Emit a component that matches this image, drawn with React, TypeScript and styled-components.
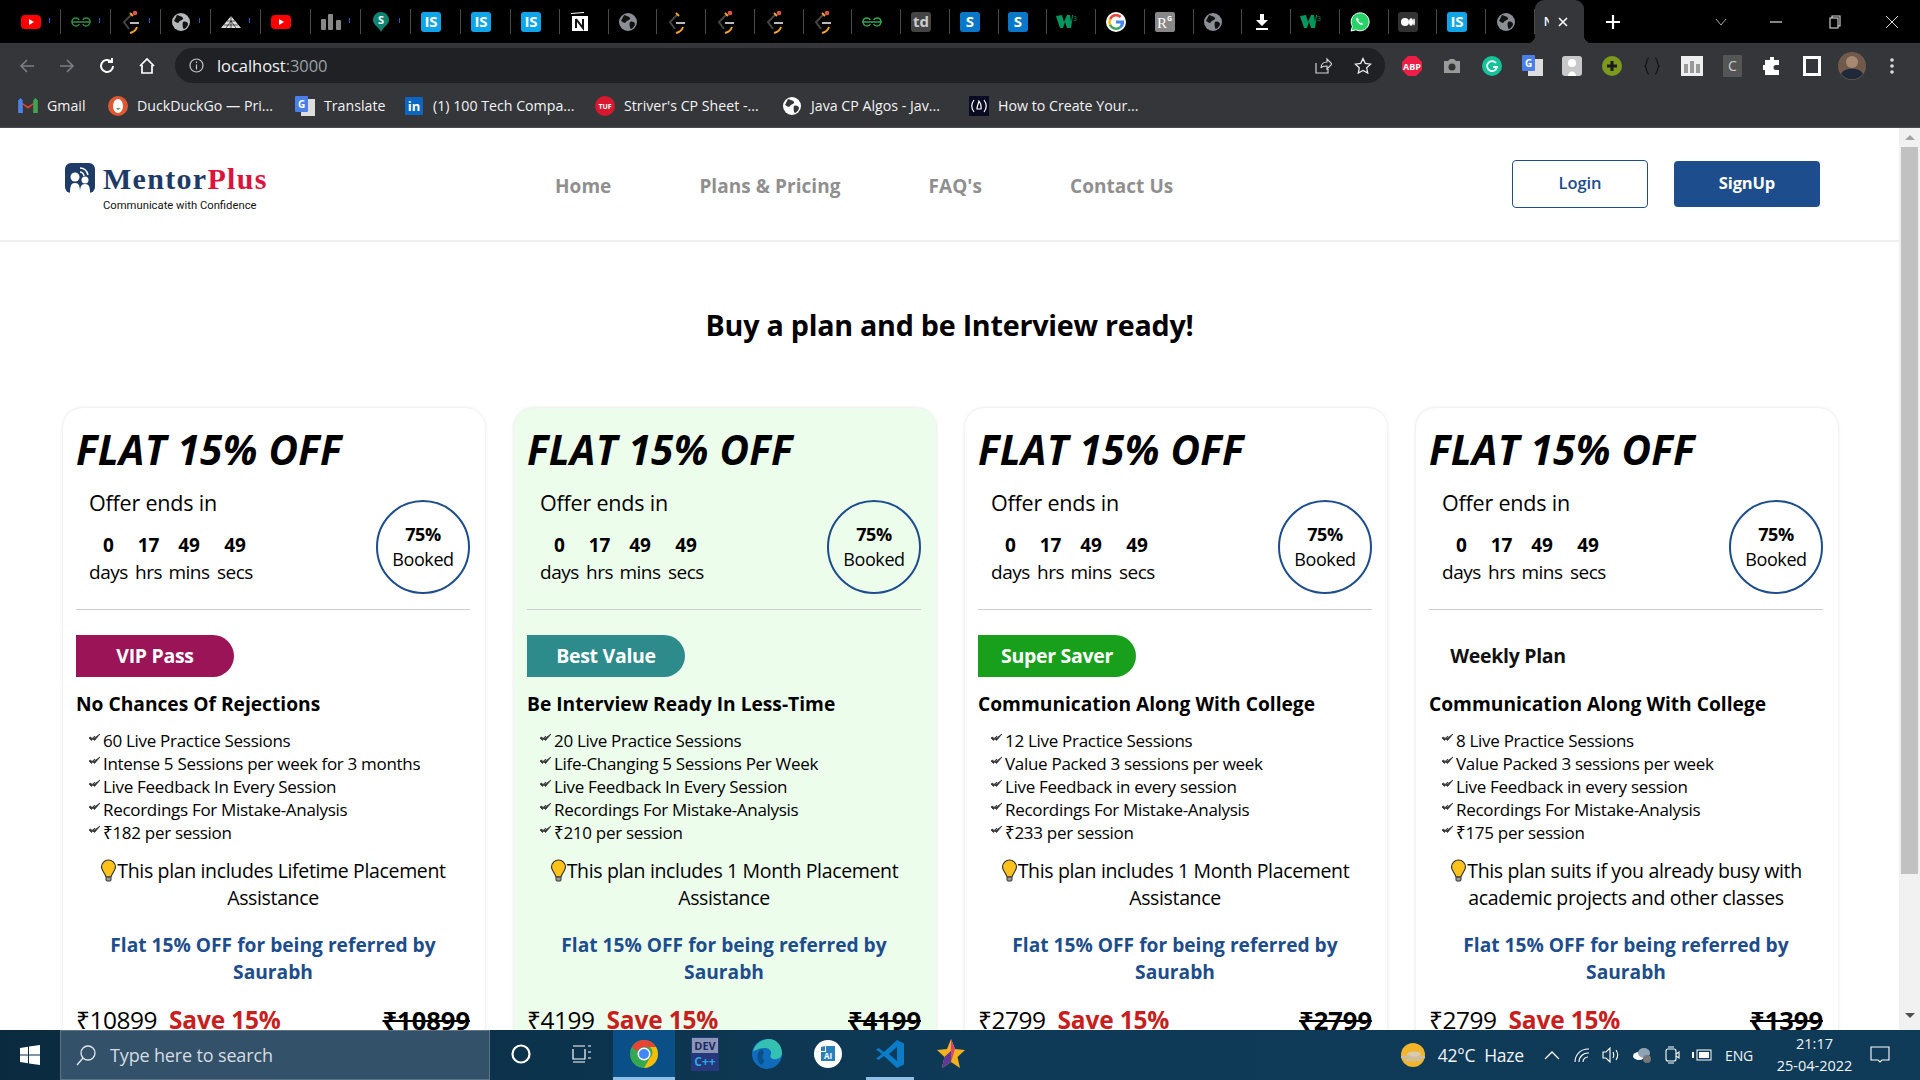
import React from 'react';
import styled, { createGlobalStyle } from 'styled-components';

const Global = createGlobalStyle`
  html, body { margin: 0; padding: 0; height: 100%; overflow: hidden; background: #fff; }
  #root { height: 100vh; }
  * { box-sizing: border-box; }
`;

const Screen = styled.div`
  height: 1080px; display: flex; flex-direction: column; overflow: hidden;
  font-family: "Open Sans", "Noto Sans", sans-serif; color: #000;
`;

/* ---------- browser chrome ---------- */
const TabStrip = styled.div`
  height: 43px; flex: none; background: #000; display: flex; align-items: center; padding-left: 11px;
`;
const Tab = styled.div<{ $mark?: boolean; $wide?: boolean }>`
  position: relative;
  width: ${p => (p.$wide ? '50px' : '48.75px')}; height: 25px; flex: none; display: flex; align-items: center; justify-content: center;
  border-right: 1px solid #4a4a4a; padding-right: ${p => (p.$wide ? '9px' : '8px')};
  ${p => p.$mark && `&::after { content: ''; position: absolute; right: 10px; top: 9px; width: 1px; height: 5px; background: #1a5fd0; }`}
`;
const ActiveTab = styled.div`
  position: relative;
  width: 49px; height: 43px; flex: none; background: #35363a; border-radius: 9px 9px 0 0;
  display: flex; align-items: center; padding-left: 9px; gap: 8px; color: #fff;
  font: 600 12px "Open Sans", sans-serif;
  &::before, &::after { content: ''; position: absolute; bottom: 0; width: 8px; height: 8px; }
  &::before { left: -8px; background: radial-gradient(circle at 0 0, #000 8px, #35363a 8.5px); }
  &::after { right: -8px; background: radial-gradient(circle at 100% 0, #000 8px, #35363a 8.5px); }
`;
const TabTitleClip = styled.span` width: 5px; overflow: hidden; flex: none; `;
const NewTab = styled.div`
  width: 58px; flex: none; display: flex; align-items: center; justify-content: center;
`;
const WindowControls = styled.div`
  margin-left: auto; display: flex; align-items: center;
`;
const WindowButton = styled.div<{ $w?: number }>`
  width: ${p => p.$w ?? 57}px; height: 43px; display: flex; align-items: center; justify-content: center;
`;
const Toolbar = styled.div`
  height: 43px; flex: none; background: #35363a; display: flex; align-items: flex-start; padding: 5px 0 0 7px;
`;
const NavIcon = styled.div`
  width: 40px; height: 35px; flex: none; display: flex; align-items: center; justify-content: center;
`;
const NavIcons = styled.div`
  display: flex; width: 168px; flex: none;
`;
const Omnibox = styled.div`
  width: 1210px; height: 35px; flex: none; background: #202124; border-radius: 18px; display: flex;
  align-items: center; padding: 0 13px 0 14px; font-size: 16.5px; color: #f1f3f4; letter-spacing: -.05px;
`;
const Host = styled.span` margin-left: 13px; `;
const Port = styled.span` color: #9aa0a6; `;
const OmniRight = styled.div` margin-left: auto; display: flex; gap: 22px; align-items: center; `;
const Extensions = styled.div`
  display: flex; align-items: center; margin-left: 7px; height: 35px;
`;
const Ext = styled.div`
  width: 40px; flex: none; display: flex; align-items: center; justify-content: center;
`;
const Bookmarks = styled.div`
  height: 42px; flex: none; background: #35363a; border-bottom: 1px solid #4c4c4f; display: flex; align-items: center;
  padding: 0 0 2px 18px; color: #f1f3f4; font-size: 14.2px;
`;
const Bookmark = styled.div<{ $w: number }>`
  width: ${p => p.$w}px; flex: none; display: flex; align-items: center; gap: 9px; white-space: nowrap;
`;

/* ---------- page ---------- */
const Viewport = styled.div`
  flex: 1; min-height: 0; display: flex; overflow: hidden;
`;
const Page = styled.div`
  flex: 1; min-width: 0; overflow: hidden; background: #fff;
`;
const Header = styled.header`
  height: 114px; border-bottom: 2px solid #f0f0f0; display: flex; align-items: flex-start;
`;
const Brand = styled.div`
  width: 490px; padding: 35px 0 0 65px; flex: none; display: grid; grid-template-columns: 30px auto; column-gap: 8px;
  grid-template-rows: 30px auto; justify-content: start;
`;
const BrandName = styled.div`
  font: bold 30px/32px "Liberation Serif", serif; letter-spacing: 1.3px; color: #1d3b66; white-space: nowrap;
`;
const BrandPlus = styled.span` color: #dc143c; `;
const Tagline = styled.div`
  grid-column: 2; font: 11.25px/16px Roboto, sans-serif; color: #111; margin-top: 5px; white-space: nowrap;
`;
const Nav = styled.nav`
  display: flex; gap: 88px; padding-top: 45px; margin-left: 65px; font: 700 19px/26px "Open Sans", sans-serif; letter-spacing: .05px; color: #8f8f8f;
`;
const NavLink = styled.span` white-space: nowrap; `;
const HeaderActions = styled.div`
  margin-left: auto; margin-right: 79px; padding-top: 32px; display: flex; align-items: center; gap: 26px;
`;
const LoginButton = styled.div`
  width: 136px; height: 48px; padding-bottom: 3px; border: 1px solid #1d4d8c; border-radius: 4px; display: flex; align-items: center;
  justify-content: center; font: 600 16.5px "Open Sans", sans-serif; letter-spacing: -.1px; color: #1d4d8c;
`;
const SignupButton = styled.div`
  width: 146px; height: 46px; padding-bottom: 3px; background: #1d4d8c; border-radius: 4px; display: flex; align-items: center;
  justify-content: center; font: 700 16.5px "Open Sans", sans-serif; letter-spacing: -.15px; color: #fff;
`;
const PageTitle = styled.h1`
  margin: 0; padding-top: 63px; height: 166px; text-align: center; font-size: 28.7px; line-height: 40px; font-weight: 700; letter-spacing: -.25px;
`;
const Cards = styled.div`
  display: grid; grid-template-columns: repeat(4, 422px); gap: 29px; padding-left: 63px;
`;
const Card = styled.article<{ $hi?: boolean }>`
  height: 720px; padding: 17px 15px 0 13px; border-radius: 20px;
  background: ${p => (p.$hi ? '#edfdec' : '#fff')};
  box-shadow: 0 0 3px 1px #ececec;
`;
const Flat = styled.div`
  font-size: 40.5px; line-height: 50px; font-weight: 700; font-style: italic; letter-spacing: .3px; white-space: nowrap;
`;
const Offer = styled.div`
  display: flex; justify-content: space-between; align-items: flex-start; height: 134px;
`;
const Countdown = styled.div` padding: 14px 0 0 13px; `;
const OfferLabel = styled.div` font-size: 21.5px; line-height: 28px; letter-spacing: -.2px; white-space: nowrap; `;
const Timer = styled.div`
  display: grid; grid-template-columns: 39px 25px 40px 36px; column-gap: 8px; row-gap: 1px; justify-items: center; margin-top: 15px;
  font-size: 19px; line-height: 26px; letter-spacing: -.5px; white-space: nowrap;
`;
const Count = styled.b` font-weight: 700; letter-spacing: 0; `;
const Circle = styled.div`
  width: 94px; height: 94px; margin-top: 25px; border: 2px solid #1d4d8c; border-radius: 50%; display: flex; flex-direction: column;
  align-items: center; justify-content: center; font-size: 18px; line-height: 25px; letter-spacing: -.4px;
`;
const CirclePct = styled.b` font-weight: 700; `;
const Divider = styled.hr`
  margin: 0; border: 0; border-top: 1px solid #ccc;
`;
const Badge = styled.div<{ $bg?: string }>`
  width: 158px; height: 42px; margin-top: 25px; padding-bottom: 1px; border-radius: 0 21px 21px 0; display: flex; align-items: center;
  justify-content: center; font-size: 19.5px; font-weight: 700; letter-spacing: -.3px;
  background: ${p => p.$bg ?? 'transparent'};
  color: ${p => (p.$bg ? '#fff' : '#111')};
`;
const PlanTitle = styled.h3`
  margin: 14px 0 0; font-size: 19.2px; line-height: 26px; font-weight: 700; white-space: nowrap;
`;
const Features = styled.ul`
  list-style: none; margin: 12px 0 0; padding: 0 0 0 13px; font-size: 17px; line-height: 23px; letter-spacing: -.3px;
`;
const Feature = styled.li`
  display: flex; align-items: flex-start; gap: 3px; white-space: nowrap;
`;
const Check = styled.svg`
  flex: none; width: 11px; height: 9px; margin-top: 4px;
`;
const Note = styled.p`
  margin: 13px 0 0; text-align: center; font-size: 19.5px; line-height: 27px; letter-spacing: -.35px;
`;
const Bulb = styled.svg`
  width: 17px; height: 23px; vertical-align: -4px;
`;
const Referral = styled.p`
  margin: 20px 0 0; text-align: center; font-size: 19.2px; line-height: 27px; font-weight: 700; color: #1d4d8c;
`;
const PriceRow = styled.div`
  display: flex; align-items: center; margin-top: 19px; font-size: 24.5px; line-height: 32px; letter-spacing: -.5px; white-space: nowrap;
`;
const Save = styled.b` color: #c81e1e; font-weight: 700; margin-left: 12px; letter-spacing: -.2px; `;
const Struck = styled.b` margin-left: auto; font-size: 25.5px; letter-spacing: 0; font-weight: 700; text-decoration: line-through; `;

const Scrollbar = styled.div`
  width: 21px; flex: none; background: #f1f1f1; display: flex; flex-direction: column; align-items: center; padding: 7px 0 0;
`;
const Thumb = styled.div` width: 17px; height: 727px; background: #c1c1c1; margin-top: 7px; `;
const ScrollArrow = styled.div<{ $down?: boolean }>`
  width: 0; height: 0; border-left: 5px solid transparent; border-right: 5px solid transparent;
  ${p => (p.$down ? 'border-top: 5px solid #505050; margin-top: 139px;' : 'border-bottom: 5px solid #a3a3a3;')}
`;

/* ---------- taskbar ---------- */
const Taskbar = styled.footer`
  height: 50px; flex: none; background: linear-gradient(90deg, #0a2a3f, #0e3a57 50%, #0f3a58); display: flex; align-items: center; color: #fff;
`;
const StartButton = styled.div`
  width: 60px; height: 50px; flex: none; display: flex; align-items: center; justify-content: center;
`;
const SearchBox = styled.div`
  width: 430px; height: 50px; flex: none; background: #34516a; border: 1px solid #5d7488; display: flex; align-items: center;
  gap: 13px; padding-left: 14px; font-size: 18px; letter-spacing: -.15px; color: #d5dce2;
`;
const TaskIcon = styled.div<{ $active?: boolean; $open?: boolean }>`
  width: 61.5px; height: 50px; flex: none; display: flex; align-items: center; justify-content: center;
  background: ${p => (p.$active ? '#0a4f85' : 'transparent')};
  border-bottom: 3px solid ${p => (p.$active || p.$open ? '#8fbfe6' : 'transparent')};
  ${p => p.$open && 'border-image: linear-gradient(90deg, transparent 8px, #8fbfe6 8px, #8fbfe6 calc(100% - 8px), transparent calc(100% - 8px)) 1;'}
`;
const Tray = styled.div`
  margin-left: auto; display: flex; align-items: center; height: 50px; font-size: 17.5px; color: #f0f4f7; letter-spacing: -.2px;
`;
const Weather = styled.div` display: flex; align-items: center; gap: 12px; margin-right: 13px; white-space: nowrap; `;
const Sys = styled.div` display: flex; align-items: center; margin-right: 5px; `;
const SysSlot = styled.div` width: 30px; flex: none; display: flex; align-items: center; justify-content: center; `;
const Lang = styled.span` width: 34px; text-align: center; font-size: 14px; margin-right: 19px; `;
const Clock = styled.div` width: 79px; text-align: center; font-size: 14.5px; line-height: 22px; letter-spacing: 0; `;
const Notify = styled.div` width: 66px; padding-left: 16px; display: flex; `;

/* ---------- icons ---------- */
const Play = ({ c = '#f00' }: { c?: string }) => (
  <svg width="20" height="14" viewBox="0 0 20 14"><rect width="20" height="14" rx="4" fill={c} /><path d="M8 4l5 3-5 3z" fill="#fff" /></svg>
);
const Globe = ({ c = '#b5b8bb' }: { c?: string }) => (
  <svg width="18" height="18" viewBox="0 0 18 18"><circle cx="9" cy="9" r="9" fill={c} /><path d="M5 2c2 1 5 1 6 3s-3 2-4 4-3 0-5-1zM11 9c2-1 5 0 5 2s-3 5-4 5-2-5-1-7z" fill="#111" /></svg>
);
const Gfg = ({ c = '#2f8d46' }: { c?: string }) => (
  <svg width="20" height="10" viewBox="0 0 20 10" fill="none" stroke={c} strokeWidth="1.4"><path d="M10 5H.8c.3-2.600 2-4 4-4 1.600 0 2.800.8 3.400 2M10 5h9.200c-.3-2.600-2-4-4-4-1.600 0-2.800.8-3.400 2M1 5c.4 2.600 2 4 4 4 1.600 0 2.800-.8 3.400-2M19 5c-.4 2.600-2 4-4 4-1.600 0-2.800-.8-3.400-2" /></svg>
);
const Coder = ({ dot = true }: { dot?: boolean }) => (
  <svg width="18" height="24" viewBox="0 0 18 24" fill="none" strokeWidth="2"><path d="M9 5L2 12l5 7" stroke="#444" /><path d="M8 3l3 3" stroke="#f5a623" /><path d="M8 13h9" stroke="#bbb" /><path d="M15 17c-1 3-3 5-7 6" stroke="#f5a623" />{dot && <circle cx="13" cy="3" r="2.300" fill="#e0514f" stroke="none" />}</svg>
);
const Square = ({ bg, t, c = '#fff', fs = 15 }: { bg: string; t: string; c?: string; fs?: number }) => (
  <svg width="20" height="20" viewBox="0 0 20 20"><rect width="20" height="20" rx="3" fill={bg} /><text x="10" y="15" textAnchor="middle" fontFamily="Open Sans, sans-serif" fontWeight="700" fontSize={fs} fill={c}>{t}</text></svg>
);
const ResearchGate = () => (
  <svg width="20" height="20" viewBox="0 0 20 20"><rect width="20" height="20" rx="2" fill="#888" /><text x="2" y="16" fontFamily="Liberation Serif, serif" fontSize="15" fill="#fff">R</text><text x="12" y="9" fontFamily="Open Sans, sans-serif" fontWeight="700" fontSize="7" fill="#fff">G</text></svg>
);
const W3 = () => (
  <svg width="22" height="16" viewBox="0 0 22 16"><path d="M0 2l6-1 2 7 3-7 3 0 1 7 1-7h1l-2 13h-4l-2-6-2 6H4z" fill="#04965f" /><text x="17" y="7" fontSize="7" fill="#04965f" fontFamily="Open Sans, sans-serif">3</text></svg>
);
const GoogleG = ({ s = 20 }: { s?: number }) => (
  <svg width={s} height={s} viewBox="0 0 20 20"><circle cx="10" cy="10" r="10" fill="#fff" /><path d="M10 4.500a5.500 5.500 0 0 1 3.700 1.400L15.500 4A8 8 0 0 0 3 6.400l2.200 1.700A5 5 0 0 1 10 4.500z" fill="#ea4335" /><path d="M3 6.400a8 8 0 0 0 0 7.200l2.200-1.700a5 5 0 0 1 0-3.800z" fill="#fbbc05" /><path d="M3 13.600A8 8 0 0 0 15.400 16l-2.100-1.700A5 5 0 0 1 5.200 11.900z" fill="#34a853" /><path d="M18 8.500h-8v3h4.600a4 4 0 0 1-1.300 2.800l2.100 1.700A8 8 0 0 0 18 8.500z" fill="#4285f4" /></svg>
);
const WhatsApp = () => (
  <svg width="20" height="20" viewBox="0 0 20 20"><path d="M1 19l1.400-4.600A9 9 0 1 1 6 17.800z" fill="#25d366" stroke="#fff" strokeWidth="1" /><path d="M7 5.500c-1.500 1-1 3 .8 5s4 3 5.500 1.800l-1.500-1.800-1.300.6c-1-.5-1.700-1.300-2.200-2.300l.7-1.200z" fill="#fff" /></svg>
);
const Medium = () => (
  <svg width="20" height="20" viewBox="0 0 20 20"><rect width="20" height="20" rx="3" fill="#333" /><circle cx="7" cy="10" r="4" fill="#fff" /><ellipse cx="13" cy="10" rx="2" ry="3.800" fill="#fff" /><ellipse cx="16" cy="10" rx=".9" ry="3.400" fill="#fff" /></svg>
);
const Down = () => (
  <svg width="14" height="16" viewBox="0 0 14 16" fill="#fff"><path d="M5 0h4v6h4L7 12 1 6h4z" /><rect x="1" y="14" width="12" height="2" /></svg>
);
const Notion = () => (
  <svg width="18" height="20" viewBox="0 0 18 20"><path d="M0 1l13-1v1L0 2z" fill="#fff" /><rect x="1" y="4" width="16" height="15" fill="#fff" /><path d="M5 7v9M5 7l7 9V7" fill="none" stroke="#111" strokeWidth="2" /></svg>
);
const Peak = () => (
  <svg width="20" height="14" viewBox="0 0 20 14"><path d="M10 1l10 12H0z" fill="#ddd" /><path d="M5 13l5-7 5 7M10 1v12M3 10h14M6 6h8" stroke="#000" strokeWidth=".6" fill="none" /></svg>
);
const Bars = () => (
  <svg width="20" height="16" viewBox="0 0 20 16" fill="#888"><rect y="5" width="5" height="11" rx="1" /><rect x="7" width="5" height="16" rx="1" /><rect x="15" y="6" width="5" height="10" rx="1" /></svg>
);
const Pin = () => (
  <svg width="16" height="20" viewBox="0 0 16 20"><path d="M8 20C6 15 0 13 0 8a8 8 0 0 1 16 0c0 5-6 7-8 12z" fill="#0f8571" /><text x="8" y="11.500" textAnchor="middle" fontFamily="Open Sans, sans-serif" fontWeight="700" fontSize="11" fill="#fff">S</text></svg>
);

const tabIcons: React.ReactNode[] = [
  <Play key="a" />, <Gfg key="b" />, <Coder key="c" />, <Globe key="d" />, <Peak key="e" />, <Play key="f" />, <Bars key="g" />, <Pin key="h" />,
  <Square key="i" bg="#0ea5e9" t="IS" />, <Square key="j" bg="#0ea5e9" t="IS" />, <Square key="k" bg="#0ea5e9" t="IS" />, <Notion key="l" />,
  <Globe key="m" c="#8a8f96" />, <Coder key="n" dot={false} />, <Coder key="o" />, <Coder key="p" />, <Coder key="q" />, <Gfg key="r" c="#2fa84f" />,
  <Square key="s" bg="#444" t="td" c="#ccc" />, <Square key="t" bg="#0a78c8" t="S" />, <Square key="u" bg="#0a78c8" t="S" />, <W3 key="v" />, <GoogleG key="w" />,
  <ResearchGate key="x" />, <Globe key="y" c="#8a8f96" />, <Down key="z" />, <W3 key="aa" />, <WhatsApp key="ab" />, <Medium key="ac" />,
  <Square key="ad" bg="#0ea5e9" t="IS" />, <Globe key="ae" c="#8a8f96" />,
];
const markedTabs = [0, 1, 2, 3, 4, 6, 7];

const I = ({ children, w = 18, h = 18, vb = '0 0 18 18', stroke = '#fff', sw = 1.600 }: { children: React.ReactNode; w?: number; h?: number; vb?: string; stroke?: string; sw?: number }) => (
  <svg width={w} height={h} viewBox={vb} fill="none" stroke={stroke} strokeWidth={sw}>{children}</svg>
);

const plans = [
  { bg: '#9c1458', badge: 'VIP Pass', title: 'No Chances Of Rejections', hi: false, feats: ['60 Live Practice Sessions', 'Intense 5 Sessions per week for 3 months', 'Live Feedback In Every Session', 'Recordings For Mistake-Analysis', '₹182 per session'], note: 'This plan includes Lifetime Placement Assistance', price: '₹10899', old: '₹10899' },
  { bg: '#2e8b8b', badge: 'Best Value', title: 'Be Interview Ready In Less-Time', hi: true, feats: ['20 Live Practice Sessions', 'Life-Changing 5 Sessions Per Week', 'Live Feedback In Every Session', 'Recordings For Mistake-Analysis', '₹210 per session'], note: 'This plan includes 1 Month Placement Assistance', price: '₹4199', old: '₹4199' },
  { bg: '#18a01c', badge: 'Super Saver', title: 'Communication Along With College', hi: false, feats: ['12 Live Practice Sessions', 'Value Packed 3 sessions per week', 'Live Feedback in every session', 'Recordings For Mistake-Analysis', '₹233 per session'], note: 'This plan includes 1 Month Placement Assistance', price: '₹2799', old: '₹2799' },
  { bg: undefined, badge: 'Weekly Plan', title: 'Communication Along With College', hi: false, feats: ['8 Live Practice Sessions', 'Value Packed 3 sessions per week', 'Live Feedback in every session', 'Recordings For Mistake-Analysis', '₹175 per session'], note: 'This plan suits if you already busy with academic projects and other classes', price: '₹2799', old: '₹1399' },
];

const BulbIcon = () => (
  <Bulb viewBox="0 0 17 23"><path d="M8.500 1a7 7 0 0 0-7 7c0 3.500 3.500 6 4.500 10h5c1-4 4.500-6.500 4.500-10a7 7 0 0 0-7-7z" fill="#fcc21b" stroke="#333" strokeWidth="1.200" /><rect x="6" y="18" width="5" height="4" rx="1" fill="#999" stroke="#333" /></Bulb>
);
const CheckIcon = () => (
  <Check viewBox="0 0 11 9"><path d="M0 5l2.500 2.500L6 3l-3 2.500L1.500 4zM4 6l1.500 1.500L11 1 5.500 5z" fill="#333" stroke="#333" strokeWidth=".8" /></Check>
);

export default function App() {
  return (
    <Screen>
      <Global />
      <TabStrip>
        {tabIcons.map((ic, i) => <Tab key={i} $wide={i < 10} $mark={markedTabs.includes(i)}>{ic}</Tab>)}
        <ActiveTab><TabTitleClip>N</TabTitleClip><I w={12} h={12} vb="0 0 12 12"><path d="M2 2l8 8M10 2l-8 8" /></I></ActiveTab>
        <NewTab><I w={16} h={16} vb="0 0 16 16" sw={2.200}><path d="M8 1v14M1 8h14" /></I></NewTab>
        <WindowControls>
          <WindowButton $w={50}><I w={12} h={8} vb="0 0 12 8" stroke="#aaa" sw={1}><path d="M1 1l5 6 5-6" /></I></WindowButton>
          <WindowButton $w={60}><I w={12} h={2} vb="0 0 12 2" stroke="#ddd" sw={1.200}><path d="M0 1h12" /></I></WindowButton>
          <WindowButton $w={58}><I w={12} h={14} vb="0 0 12 14" stroke="#ddd" sw={1.100}><rect x="1" y="3" width="8" height="10" /><path d="M3 3V1h8v10H9" /></I></WindowButton>
          <WindowButton $w={56}><I w={14} h={14} vb="0 0 14 14" stroke="#ddd" sw={1}><path d="M1 1l12 12M13 1L1 13" /></I></WindowButton>
        </WindowControls>
      </TabStrip>
      <Toolbar>
        <NavIcons>
          <NavIcon><I stroke="#7c7e82"><path d="M16 9H3M9 3L3 9l6 6" /></I></NavIcon>
          <NavIcon><I stroke="#7c7e82"><path d="M2 9h13M9 3l6 6-6 6" /></I></NavIcon>
          <NavIcon><I sw={2}><path d="M15 9a6 6 0 1 1-2-4.500M14 1v4h-4" /></I></NavIcon>
          <NavIcon><I sw={1.700}><path d="M2 9l7-7 7 7M4 8v8h10V8" /></I></NavIcon>
        </NavIcons>
        <Omnibox>
          <I w={15} h={15} vb="0 0 15 15" stroke="#c4c7c9" sw={1.200}><circle cx="7.500" cy="7.500" r="6.500" /><path d="M7.500 6.500v5M7.500 3.500v1.500" /></I>
          <Host>localhost<Port>:3000</Port></Host>
          <OmniRight>
            <I stroke="#d0d2d4" sw={1.200}><path d="M2 6v10h12v-4M7 11c0-4 3-6 6-6V2l5 5-5 5V9c-3 0-5 0-6 2z" /></I>
            <I stroke="#e8eaed" sw={1.300}><path d="M9 1.500l2.300 4.900 5.300.7-3.900 3.700 1 5.300L9 13.500 4.300 16.100l1-5.300L1.400 7.100l5.300-.7z" /></I>
          </OmniRight>
        </Omnibox>
        <Extensions>
          <Ext><svg width="22" height="22" viewBox="0 0 22 22"><path d="M7 1h8l6 6v8l-6 6H7l-6-6V7z" fill="#ee1d45" /><text x="11" y="14.500" textAnchor="middle" fontFamily="Open Sans, sans-serif" fontWeight="700" fontSize="9" fill="#fff">ABP</text></svg></Ext>
          <Ext><svg width="20" height="16" viewBox="0 0 20 16"><path d="M2 3h4l2-2h4l2 2h4v12H2z" fill="#9a9a9a" /><circle cx="10" cy="9" r="3.500" fill="#333" /></svg></Ext>
          <Ext><svg width="20" height="20" viewBox="0 0 20 20"><circle cx="10" cy="10" r="10" fill="#15c39a" /><path d="M14 7a5 5 0 1 0 1 4h-4" fill="none" stroke="#fff" strokeWidth="1.800" /></svg></Ext>
          <Ext><svg width="21" height="21" viewBox="0 0 21 21"><rect x="6" y="4" width="15" height="17" fill="#ddd" /><rect width="13" height="16" rx="1" fill="#4a7fe8" /><text x="6.500" y="12" textAnchor="middle" fontFamily="Open Sans, sans-serif" fontWeight="700" fontSize="10" fill="#fff">G</text></svg></Ext>
          <Ext><svg width="20" height="20" viewBox="0 0 20 20"><rect width="20" height="20" rx="3" fill="#c8c8c8" /><circle cx="10" cy="7" r="4" fill="#fff" /><path d="M6 20c0-6 8-6 8 0z" fill="#fff" /></svg></Ext>
          <Ext><svg width="20" height="20" viewBox="0 0 20 20"><circle cx="10" cy="10" r="10" fill="#7d9a1e" /><path d="M10 5v10M5 10h10" stroke="#1a1a1a" strokeWidth="3" /></svg></Ext>
          <Ext><I w={20} h={20} vb="0 0 20 20" stroke="#111" sw={1.200}><path d="M7 2C4 2 5 9 3 10c2 1 1 8 4 8M13 2c3 0 2 7 4 8-2 1-1 8-4 8" /></I></Ext>
          <Ext><svg width="22" height="20" viewBox="0 0 22 20"><rect width="22" height="20" fill="#eee" /><path d="M3 8h4v9H3zM9 5h4v12H9zM15 8h4v9h-4z" fill="#999" /></svg></Ext>
          <Ext><svg width="19" height="22" viewBox="0 0 19 22"><rect width="19" height="22" rx="1" fill="#555" /><text x="9.500" y="16" textAnchor="middle" fontFamily="Open Sans, sans-serif" fontSize="14" fill="#ccc">C</text></svg></Ext>
          <Ext><svg width="18" height="18" viewBox="0 0 18 18" fill="#fff"><path d="M7 0h4v3h5v5h-3a2.500 2.500 0 0 0 0 5h3v5H2v-5H0V8h2V3h5z" /></svg></Ext>
          <Ext><svg width="18" height="20" viewBox="0 0 18 20"><rect x="1.500" y="1.500" width="15" height="17" fill="none" stroke="#fff" strokeWidth="3" /></svg></Ext>
          <Ext><svg width="28" height="28" viewBox="0 0 28 28"><circle cx="14" cy="14" r="14" fill="#6f5a4b" /><circle cx="14" cy="10" r="6" fill="#a88a74" /><path d="M3 22c3-7 19-7 22 0a14 14 0 0 1-22 0z" fill="#1e2a3a" /></svg></Ext>
          <Ext><svg width="4" height="16" viewBox="0 0 4 16" fill="#ddd"><circle cx="2" cy="2" r="1.800" /><circle cx="2" cy="8" r="1.800" /><circle cx="2" cy="14" r="1.800" /></svg></Ext>
        </Extensions>
      </Toolbar>
      <Bookmarks>
        <Bookmark $w={90}><svg width="20" height="15" viewBox="0 0 18 14"><path d="M0 2v12h4V6l5 4 5-4v8h4V2L9 8z" fill="#ea4335" /><path d="M0 2l2-2 2 2v12H0z" fill="#4285f4" /><path d="M14 2l2-2 2 2v12h-4z" fill="#34a853" /></svg>Gmail</Bookmark>
        <Bookmark $w={187}><svg width="20" height="20" viewBox="0 0 20 20"><circle cx="10" cy="10" r="10" fill="#de5833" /><ellipse cx="10" cy="10" rx="5" ry="7" fill="#fff" /><path d="M8 12h5l-3 2z" fill="#5b9e4d" /></svg>DuckDuckGo — Pri...</Bookmark>
        <Bookmark $w={109}><svg width="20" height="20" viewBox="0 0 20 20"><rect x="6" y="3" width="14" height="17" fill="#ddd" /><rect width="13" height="16" rx="1" fill="#4a7fe8" /><text x="6.500" y="12" textAnchor="middle" fontFamily="Open Sans, sans-serif" fontWeight="700" fontSize="10" fill="#fff">G</text></svg>Translate</Bookmark>
        <Bookmark $w={191}><svg width="20" height="18" viewBox="0 0 18 18"><rect width="18" height="18" rx="1" fill="#0a66c2" /><text x="9" y="14" textAnchor="middle" fontFamily="Open Sans, sans-serif" fontWeight="700" fontSize="13" fill="#fff">in</text></svg>(1) 100 Tech Compa...</Bookmark>
        <Bookmark $w={187}><svg width="20" height="20" viewBox="0 0 20 20"><circle cx="10" cy="10" r="10" fill="#d9182f" /><text x="10" y="13" textAnchor="middle" fontFamily="Open Sans, sans-serif" fontWeight="700" fontSize="7" fill="#fff">TUF</text></svg>Striver's CP Sheet -...</Bookmark>
        <Bookmark $w={187}><svg width="20" height="18" viewBox="0 0 18 18"><circle cx="9" cy="9" r="9" fill="#fff" /><path d="M5 2c2 1 5 1 6 3s-3 2-4 4-3 0-5-1zM11 9c2-1 5 0 5 2s-3 5-4 5-2-5-1-7z" fill="#35363a" /></svg>Java CP Algos - Jav...</Bookmark>
        <Bookmark $w={200}><svg width="20" height="20" viewBox="0 0 20 20"><rect width="20" height="20" fill="#0a0a23" /><path d="M5 4c-3 4-3 8 0 12M15 4c3 4 3 8 0 12M10 5c3 4 2 6 2 8H8c0-3 1-4 2-8z" fill="none" stroke="#fff" strokeWidth="1.200" /></svg>How to Create Your...</Bookmark>
      </Bookmarks>
      <Viewport>
        <Page>
          <Header>
            <Brand>
              <svg width="30" height="30" viewBox="0 0 30 30"><rect width="30" height="30" rx="6" fill="#1d3b66" /><circle cx="10" cy="14" r="4.500" fill="#fff" /><path d="M5 30c0-7 1-10 5-10s5 3 5 10z" fill="#fff" /><circle cx="20" cy="17" r="3.500" fill="#fff" /><path d="M15 30c0-6 1-9 5-9s5 3 5 9z" fill="#fff" /><path d="M15 5c4 0 7 3 8 7M15 9c2 0 4 2 4 4" fill="none" stroke="#fff" strokeWidth="1.500" /></svg>
              <BrandName>Mentor<BrandPlus>Plus</BrandPlus></BrandName>
              <Tagline>Communicate with Confidence</Tagline>
            </Brand>
            <Nav>
              <NavLink>Home</NavLink>
              <NavLink>Plans &amp; Pricing</NavLink>
              <NavLink>FAQ's</NavLink>
              <NavLink>Contact Us</NavLink>
            </Nav>
            <HeaderActions>
              <LoginButton>Login</LoginButton>
              <SignupButton>SignUp</SignupButton>
            </HeaderActions>
          </Header>
          <PageTitle>Buy a plan and be Interview ready!</PageTitle>
          <Cards>
            {plans.map(p => (
              <Card key={p.badge} $hi={p.hi}>
                <Flat>FLAT 15% OFF</Flat>
                <Offer>
                  <Countdown>
                    <OfferLabel>Offer ends in</OfferLabel>
                    <Timer>
                      <Count>0</Count><Count>17</Count><Count>49</Count><Count>49</Count>
                      <span>days</span><span>hrs</span><span>mins</span><span>secs</span>
                    </Timer>
                  </Countdown>
                  <Circle><CirclePct>75%</CirclePct><span>Booked</span></Circle>
                </Offer>
                <Divider />
                <Badge $bg={p.bg}>{p.badge}</Badge>
                <PlanTitle>{p.title}</PlanTitle>
                <Features>
                  {p.feats.map(f => <Feature key={f}><CheckIcon />{f}</Feature>)}
                </Features>
                <Note><BulbIcon />{p.note}</Note>
                <Referral>Flat 15% OFF for being referred by Saurabh</Referral>
                <PriceRow><span>{p.price}</span><Save>Save 15%</Save><Struck>{p.old}</Struck></PriceRow>
              </Card>
            ))}
          </Cards>
        </Page>
        <Scrollbar>
          <ScrollArrow />
          <Thumb />
          <ScrollArrow $down />
        </Scrollbar>
      </Viewport>
      <Taskbar>
        <StartButton><svg width="20" height="20" viewBox="0 0 20 20" fill="#fff"><path d="M0 3l8-1.200V9.500H0zM9 1.600L20 0v9.500H9zM0 10.500h8v7.700L0 17zM9 10.500h11V20L9 18.400z" /></svg></StartButton>
        <SearchBox><I w={22} h={22} vb="0 0 22 22" stroke="#e4e8ec" sw={1.300}><circle cx="13" cy="9" r="7" /><path d="M8 14l-6 7" /></I>Type here to search</SearchBox>
        <TaskIcon><svg width="20" height="20" viewBox="0 0 20 20"><circle cx="10" cy="10" r="8.500" fill="none" stroke="#fff" strokeWidth="2.200" /></svg></TaskIcon>
        <TaskIcon><I w={20} h={20} vb="0 0 20 20" sw={1.200}><path d="M1 2h12M1 5v10h12V5M1 18h12M16 2h3M16 8h3M16 14h3" /></I></TaskIcon>
        <TaskIcon $active><svg width="28" height="28" viewBox="0 0 28 28"><circle cx="14" cy="14" r="14" fill="#34a853" /><path d="M14 0a14 14 0 0 1 12.100 7H14a7 7 0 0 0-6.500 4.500L2 7A14 14 0 0 1 14 0z" fill="#ea4335" /><path d="M26.100 7A14 14 0 0 1 14 28l5.800-10A7 7 0 0 0 20 7z" fill="#fbbc05" /><circle cx="14" cy="14" r="6.500" fill="#fff" /><circle cx="14" cy="14" r="5" fill="#4285f4" /></svg></TaskIcon>
        <TaskIcon><svg width="28" height="34" viewBox="0 0 28 34"><rect width="28" height="34" fill="#24387a" /><rect x="1" y="1" width="26" height="15" fill="#8d95b8" /><text x="14" y="13" textAnchor="middle" fontFamily="Open Sans, sans-serif" fontWeight="700" fontSize="11" fill="#1b2a5e">DEV</text><text x="14" y="29" textAnchor="middle" fontFamily="Open Sans, sans-serif" fontWeight="700" fontSize="12" fill="#2aa6e8">C++</text></svg></TaskIcon>
        <TaskIcon><svg width="30" height="30" viewBox="0 0 30 30"><circle cx="15" cy="15" r="15" fill="#0f6cbd" /><path d="M1 13C3 4 11 0 17 0c7 0 13 6 13 14 0 5-5 7-9 6-3-1-3-3-2-5 1-3-2-6-6-6-5 0-10 2-12 4z" fill="#35c1b1" /><path d="M11 24c-4-3-4-10 0-12" fill="none" stroke="#0b4f8a" strokeWidth="5" /></svg></TaskIcon>
        <TaskIcon><svg width="28" height="28" viewBox="0 0 28 28"><circle cx="14" cy="14" r="14" fill="#fff" /><path d="M7 7l4-1v5H7zM12 6h9v15H7v-9h5z" fill="#2a7fbf" /><text x="14" y="19" textAnchor="middle" fontFamily="Open Sans, sans-serif" fontWeight="700" fontSize="8" fill="#fff">AI</text></svg></TaskIcon>
        <TaskIcon $open><svg width="30" height="30" viewBox="0 0 30 30"><path d="M22 1l7 3.500v21L22 29 9 17l-5.500 4L1 19.500 7 15 1 10.500 3.500 9 9 13z" fill="#0a7cc8" /><path d="M22 8l-8 7 8 7z" fill="#0f3a58" /></svg></TaskIcon>
        <TaskIcon><svg width="30" height="32" viewBox="0 0 30 32"><path d="M15 1l4 10 10 1-7.500 7L24 30l-9-6-9 6 2.500-11L1 12l10-1z" fill="#f5b21a" /><path d="M15 1l4 10-4 13-9 6 2.500-11L15 13z" fill="#d8437a" /><path d="M15 13l-6.500 6L6 30l9-6z" fill="#5a3c93" /></svg></TaskIcon>
        <Tray>
          <Weather><svg width="26" height="26" viewBox="0 0 26 26"><circle cx="13" cy="13" r="12" fill="#f5b52b" /><path d="M1 15h24M5 18h16" stroke="#c9bfa7" strokeWidth="2.500" /><ellipse cx="14" cy="12" rx="7" ry="2.500" fill="#d9cbb0" /></svg>42°C&nbsp;&nbsp;Haze</Weather>
          <Sys>
            <SysSlot><I w={16} h={9} vb="0 0 16 9" sw={1.300}><path d="M1 8l7-7 7 7" /></I></SysSlot>
            <SysSlot><I w={17} h={15} vb="0 0 17 15" sw={1.100}><path d="M1 14A13 13 0 0 1 15 1M5 14A9 9 0 0 1 15 5M9 14a5 5 0 0 1 5-5" /></I></SysSlot>
            <SysSlot><I w={20} h={16} vb="0 0 20 16" sw={1.100}><path d="M1 5h3l4-4v14l-4-4H1zM11 5c1 2 1 4 0 6M14 3c2 3 2 7 0 10" /></I></SysSlot>
            <SysSlot><svg width="20" height="16" viewBox="0 0 20 16"><ellipse cx="7" cy="9" rx="6" ry="4" fill="#fff" /><ellipse cx="12" cy="6" rx="6" ry="5" fill="#8fa5b5" /><circle cx="15" cy="12" r="4" fill="#777" /></svg></SysSlot>
            <SysSlot><I w={15} h={18} vb="0 0 15 18" sw={1.100}><rect x="1" y="3" width="10" height="12" rx="2" /><path d="M11 8l3-2v6l-3-2M3 1h6M3 17h6" /></I></SysSlot>
            <SysSlot><svg width="20" height="12" viewBox="0 0 20 12" fill="#fff"><rect x="5" y="1" width="14" height="10" fill="none" stroke="#fff" /><rect x="7" y="3" width="10" height="6" /><path d="M0 3h2v6H0z" /></svg></SysSlot>
          </Sys>
          <Lang>ENG</Lang>
          <Clock><div>21:17</div><div>25-04-2022</div></Clock>
          <Notify><I w={20} h={18} vb="0 0 20 18" sw={1.100}><path d="M1 1h18v13h-7l-2 2-2-2H1z" /></I></Notify>
        </Tray>
      </Taskbar>
    </Screen>
  );
}
